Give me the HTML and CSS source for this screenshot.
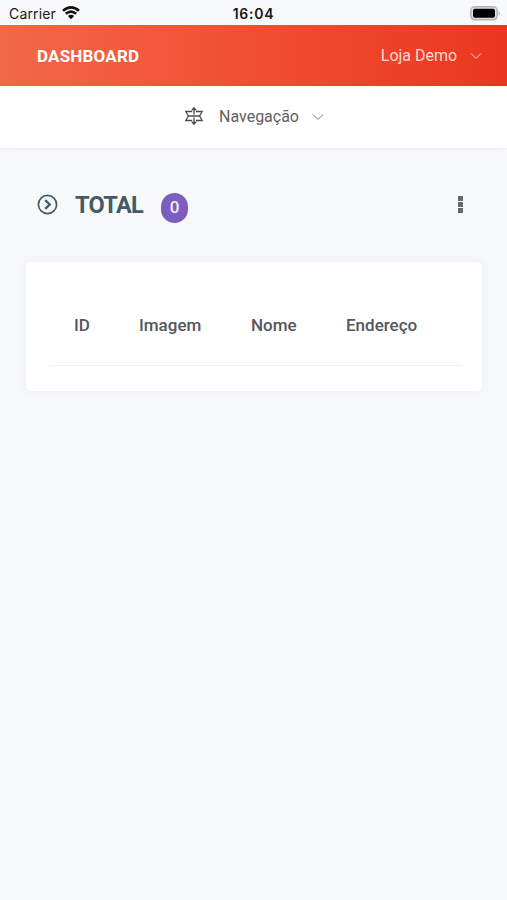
FILE: index.html
```html
<!DOCTYPE html>
<html lang="pt-BR">
<head>
<meta charset="utf-8">
<title>Dashboard</title>
<link rel="stylesheet" href="styles.css">
</head>
<body>
<div class="status">
  <div class="carrier"><span>Carrier</span>
    <svg class="wifi" width="18" height="14" viewBox="0 0 18 14" fill="none" stroke="#111" stroke-width="2.5"><path d="M1 4.8Q9-2 17 4.8M3.8 7.8Q9 3.4 14.2 7.8"/><path d="M5.9 10.1Q9 7.6 12.1 10.1L9 13.3Z" fill="#111" stroke="none"/></svg>
  </div>
  <span class="clock">16:04</span>
  <svg class="battery" width="31" height="15" viewBox="0 0 31 15"><rect x=".8" y=".8" width="26.4" height="13" rx="4" fill="#ddd" stroke="#b4b4b4" stroke-width="1.5"/><rect x="3" y="2.8" width="22" height="9" rx="2" fill="#000"/><path d="M28.7 5Q31 7.3 28.7 9.6Z" fill="#aaa"/></svg>
</div>
<header class="topbar">
  <span class="brand">DASHBOARD</span>
  <div class="account"><span>Loja Demo</span>
    <svg width="12" height="8" viewBox="0 0 12 8" fill="none" stroke="currentColor" stroke-width="1"><path d="M1 1.5L6 6.5L11 1.5"/></svg>
  </div>
</header>
<nav class="nav">
  <svg class="nav-icon" width="20" height="20" viewBox="0 0 20 20" fill="none" stroke="#4c4c4c" stroke-width="1.3"><path d="M10 2V8.6M10 11.4V18M3.8 10H16.2M8.2 5.5H1.8L4.4 10L1.8 14.5H8.2M11.8 5.5H18.2L15.6 10L18.2 14.5H11.8"/><path d="M10 .8L13 4.3H7ZM10 19.2L13 15.7H7Z" fill="#4c4c4c" stroke="none"/></svg>
  <span class="nav-label">Navegação</span>
  <svg width="12" height="8" viewBox="0 0 12 8" fill="none" stroke="#777" stroke-width="1"><path d="M1 1.5L6 6.5L11 1.5"/></svg>
</nav>
<main>
  <div class="heading">
    <svg width="21" height="21" viewBox="0 0 21 21" fill="none" stroke="#455a64"><circle cx="10.5" cy="10.5" r="9.1" stroke-width="1.7"/><path d="M8.2 6.2L12.7 10.5L8.2 14.8" stroke-width="2.4"/></svg>
    <h1>TOTAL</h1>
    <span class="count">0</span>
    <div class="more"><i></i><i></i><i></i></div>
  </div>
  <section class="card">
    <div class="columns"><span class="c-id">ID</span><span class="c-img">Imagem</span><span class="c-name">Nome</span><span class="c-addr">Endereço</span></div>
  </section>
</main>
</body>
</html>
```
FILE: styles.css
```css
* { box-sizing: border-box; }
body { margin: 0; min-height: 900px; background: #f6f8fa; font-family: Roboto, sans-serif; color: #54575b; }
svg { display: block; flex: none; }
.status { height: 25px; display: grid; grid-template-columns: 1fr auto 1fr; padding: 3px 6px 0 9px; background: #f7f9fb; font-family: Inter, sans-serif; color: #161616; line-height: 22px; }
.carrier { display: flex; gap: 6px; font-size: 14px; letter-spacing: .15px; }
.wifi { margin-top: 3px; }
.clock { margin-left: -3px; font-size: 14px; font-weight: 600; letter-spacing: .75px; }
.battery { justify-self: end; margin-top: 3px; }
.topbar { height: 61px; padding: 0 25px 0 37px; display: flex; align-items: center; justify-content: space-between; background: linear-gradient(to right, #f36846, #f04c2f 55%, #eb3720); color: #fff; }
.brand { font-size: 17px; font-weight: 700; letter-spacing: .2px; }
.account { display: flex; align-items: center; gap: 13px; font-size: 16px; color: #ffd9d2; letter-spacing: -.02px; }
.nav { height: 62px; padding-bottom: 1px; display: flex; align-items: center; justify-content: center; background: #fff; box-shadow: 0 1px 5px rgba(50, 60, 80, .07); font-size: 16px; color: #626262; }
.nav-icon { margin: 0 -1px 1px 1px; }
.nav-label { margin: 0 13px 0 16px; letter-spacing: -.02px; }
.heading { height: 114px; padding: 0 44px 1px 37px; display: flex; align-items: center; }
h1 { margin: 0 18px 0 17px; font-size: 23.5px; font-weight: 700; line-height: 28px; letter-spacing: -.7px; color: #455a64; }
.count { width: 27px; height: 30px; margin-top: 6px; border-radius: 14px; background: #7e5dc0; color: #f1eafa; font-size: 17px; font-weight: 500; line-height: 28px; text-align: center; }
.more { margin-left: auto; display: grid; gap: 1px; }
.more i { width: 5px; height: 5px; background: #66686a; }
.card { height: 129px; margin: 0 25px 0 26px; padding: 23px 20px 24px 23px; border-radius: 5px; background: #fff; box-shadow: 0 0 12px rgba(60, 70, 100, .05); }
.columns { height: 81px; display: flex; align-items: center; padding-left: 25px; border-bottom: 1px solid #f2f2f3; font-size: 17px; font-weight: 500; }
.c-id { width: 65px; }
.c-img { width: 112px; }
.c-name { width: 95px; }
```
